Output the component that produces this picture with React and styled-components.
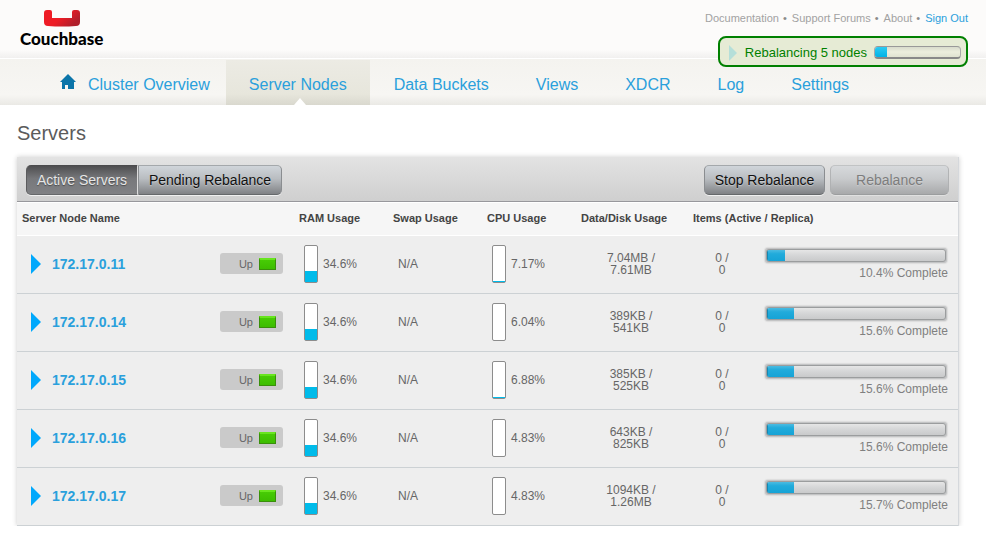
import React from 'react';
import styled, { createGlobalStyle } from 'styled-components';

const GlobalStyle = createGlobalStyle`
  *, *::before, *::after { box-sizing: border-box; }
  body {
    margin: 0;
    background: #fff;
    color: #666;
    font-family: "Liberation Sans", Arial, sans-serif;
    font-size: 12px;
    line-height: 12px;
  }
  a { color: #2aa0dc; text-decoration: none; }
  button { font-family: inherit; cursor: pointer; }
  button:disabled { cursor: default; }
`;

const Header = styled.header`
  display: flex;
  justify-content: space-between;
  align-items: flex-start;
  height: 58px;
  padding: 10px 18px 0 20px;
  background: linear-gradient(#fcfbfa 0 50px, #f1f0ef);
`;

const Brand = styled.a`
  display: flex;
  flex-direction: column;
  align-items: center;
  color: #000;
  font: 900 17px/20px Lato, "Open Sans", sans-serif;

  svg { display: block; margin-bottom: 2px; }
`;

const UtilityLinks = styled.nav`
  display: flex;
  align-items: center;
  font-size: 11px;
  line-height: 16px;
`;

const UtilityLink = styled.a`
  color: ${(p) => (p.$accent ? '#2aa0dc' : '#a2a2a2')};

  &:not(:first-child)::before {
    content: "•";
    margin: 0 5px 0 4px;
    color: #8b8b8b;
  }
`;

const TaskStatus = styled.div`
  position: absolute;
  top: 36px;
  right: 18px;
  display: flex;
  align-items: center;
  height: 31px;
  padding: 2px 5px 0 9px;
  border: 2px solid #008000;
  border-radius: 8px;
  background: #e6ebd5;
  color: #008000;
  font-size: 13px;
  line-height: 16px;

  svg { display: block; margin-right: 8px; }
`;

const TaskTrack = styled.div`
  width: 87px;
  height: 13px;
  margin-left: 7px;
  overflow: hidden;
  border: 1px solid;
  border-color: #999 #a8a8a8 #888;
  border-width: 1px 1px 2px;
  border-radius: 4px;
  background: linear-gradient(#d8dbcc, #eceedd 50%, #dfe2d0);
`;

const TaskFill = styled.div`
  height: 100%;
  background: linear-gradient(#2ccaf2, #00b3e6);
`;

const MainNav = styled.nav`
  display: flex;
  align-items: stretch;
  gap: 1px;
  height: 47px;
  padding-left: 60px;
  border-top: 1px solid #fff;
  background: linear-gradient(#f4f3ef, #f7f6f3 36px, #eae9e5);

  > svg { margin: 15px 11px 0 0; }
`;

const NavItem = styled.a`
  position: relative;
  margin-top: 1px;
  padding: 15px 23px 0;
  font-size: 16px;
  line-height: 20px;
  white-space: nowrap;
  background: ${(p) => (p.$active ? 'linear-gradient(#ecebe4, #e7e6dc 34px, #d9d8ce)' : 'none')};

  &:first-of-type { padding: 15px 15px 0 0; }

  &::after {
    content: "";
    display: ${(p) => (p.$active ? 'block' : 'none')};
    position: absolute;
    bottom: 0;
    left: 50%;
    margin-left: -4px;
    border: 6px solid transparent;
    border-top: 0;
    border-bottom: 7px solid #fff;
  }
`;

const Main = styled.main`
  padding: 14px 27px 0 17px;
`;

const Title = styled.h1`
  margin: 0 0 10px;
  color: #5b5b5b;
  font-size: 20px;
  font-weight: normal;
  line-height: 28px;
`;

const Panel = styled.section`
  border-right: 1px solid #d5d8dc;
  background: #eee;
  box-shadow: 0 0 5px rgba(0, 0, 0, 0.2);
`;

const Toolbar = styled.div`
  display: flex;
  align-items: center;
  justify-content: space-between;
  height: 45px;
  padding: 1px 9px 0;
  border-bottom: 1px solid #98989c;
  background: linear-gradient(#e3e3e3, #cfcfcf);
`;

const ButtonGroup = styled.div`
  display: flex;
  gap: ${(p) => p.$gap || 0}px;
`;

const ToolButton = styled.button`
  min-width: ${(p) => p.$minWidth || 0}px;
  height: 30px;
  padding: 0 9px;
  border: 1px solid;
  border-color: #a4a8ab #8a8d90 #66696b;
  border-radius: 5px;
  background: linear-gradient(#d0d5da, #b9bdc1 45%, #808285);
  color: #111;
  font-size: 14px;
  line-height: 20px;
  text-shadow: 0 1px 1px rgba(255, 255, 255, 0.4);
  box-shadow: 0 1px 0 #f0f0f0;

  &:disabled { opacity: 0.5; color: #222; }
`;

const TabButton = styled(ToolButton)`
  border-radius: ${(p) => (p.$active ? '5px 0 0 5px' : '0 5px 5px 0')};

  ${(p) => p.$active && `
    border-color: #4c4c4e #ddd #66686a #5c5c5e;
    background: linear-gradient(#4f4f51, #77787b 45%, #808184);
    color: #e6e6e6;
    text-shadow: 0 1px 1px rgba(0, 0, 0, 0.4);
  `}
`;

const ServerTable = styled.table`
  width: 100%;
  table-layout: fixed;
  border-collapse: separate;
  border-spacing: 0;
`;

const Col = styled.col`
  width: ${(p) => (p.$width ? `${p.$width}px` : 'auto')};
`;

const HeadCell = styled.th`
  height: 34px;
  padding: 0 0 2px ${(p) => p.$indent || 0}px;
  border-top: 1px solid #fff;
  border-bottom: 1px solid #fff;
  background: #f6f6f6;
  color: #444;
  font-size: 11px;
  text-align: left;
  white-space: nowrap;
`;

const Cell = styled.td`
  height: 58px;
  padding: 0 0 2px ${(p) => p.$indent || 0}px;
  border-bottom: 1px solid #ccd1d4;
  text-align: ${(p) => p.$align || 'left'};
  vertical-align: middle;
`;

const Inline = styled.div`
  display: flex;
  align-items: center;
  gap: ${(p) => p.$gap}px;
`;

const ExpandButton = styled.button`
  display: block;
  padding: 0;
  border: 0;
  background: none;

  svg { display: block; }
`;

const NodeLink = styled.a`
  font-size: 14px;
  font-weight: bold;
  line-height: 18px;
`;

const StatusBadge = styled.div`
  display: flex;
  align-items: center;
  justify-content: flex-end;
  gap: 6px;
  width: 63px;
  height: 21px;
  padding-right: 7px;
  border-radius: 3px;
  background: #cacaca;
  font-size: 11px;

  &::after {
    content: "";
    width: 17px;
    height: 12px;
    border: 1px solid #398f0b;
    border-top: 2px solid #68e51e;
    background: linear-gradient(#47cb05, #3dbd00);
  }
`;

const Gauge = styled.div`
  display: flex;
  align-items: flex-end;
  width: 14px;
  height: 38px;
  border: 1px solid #8c8c8c;
  border-radius: 2px;
  background: #fff;
`;

const GaugeFill = styled.div`
  width: 100%;
  background: #00bbea;
`;

const Track = styled.div`
  height: 15px;
  padding: 1px;
  border-radius: 3px;
  background: #c3c4c5;
  box-shadow: 0 0 1px 1px #dcdcdc;
`;

const TrackInner = styled.div`
  height: 13px;
  overflow: hidden;
  border: 1px solid #9b9d9e;
  border-radius: 3px;
  background: linear-gradient(#e6e6e6, #d6d7d8 45%, #c9cacb);
`;

const TrackFill = styled.div`
  height: 100%;
  border-left: 1px solid #1687b0;
  background: linear-gradient(#4bbbe1, #21abdb 35%, #16a3d6);
`;

const ProgressLabel = styled.div`
  margin: 4px -1px 0 0;
  color: #808080;
  text-align: right;
`;

const ProgressWrap = styled.div`
  padding: 0 11px 0 14px;
`;

const servers = [
  { name: '172.17.0.11', cpu: 7.17, data: '7.04MB', disk: '7.61MB', progress: 10.4 },
  { name: '172.17.0.14', cpu: 6.04, data: '389KB', disk: '541KB', progress: 15.6 },
  { name: '172.17.0.15', cpu: 6.88, data: '385KB', disk: '525KB', progress: 15.6 },
  { name: '172.17.0.16', cpu: 4.83, data: '643KB', disk: '825KB', progress: 15.6 },
  { name: '172.17.0.17', cpu: 4.83, data: '1094KB', disk: '1.26MB', progress: 15.7 },
];

const navItems = ['Cluster Overview', 'Server Nodes', 'Data Buckets', 'Views', 'XDCR', 'Log', 'Settings'];

function Usage({ label, value, level }) {
  return (
    <Inline $gap={5}>
      <Gauge role="img" aria-label={`${label} ${value}`}>
        <GaugeFill style={{ height: level }} />
      </Gauge>
      <span>{value}</span>
    </Inline>
  );
}

function ServerRow({ server }) {
  return (
    <tr>
      <Cell $indent={14}>
        <Inline $gap={11}>
          <ExpandButton aria-label={`Expand ${server.name}`}>
            <svg width="10" height="20" viewBox="0 0 10 20"><path d="M0 0L10 10L0 20Z" fill="#00a8fc" /></svg>
          </ExpandButton>
          <NodeLink href="#node">{server.name}</NodeLink>
        </Inline>
      </Cell>
      <Cell><StatusBadge>Up</StatusBadge></Cell>
      <Cell $indent={5}><Usage label="RAM" value="34.6%" level={11} /></Cell>
      <Cell $indent={5}>N/A</Cell>
      <Cell $indent={5}>
        <Usage label="CPU" value={`${server.cpu}%`} level={server.cpu > 6.5 ? 1 : 0} />
      </Cell>
      <Cell $align="center">{server.data} /<br />{server.disk}</Cell>
      <Cell $align="center" $indent={12}>0 /<br />0</Cell>
      <Cell>
        <ProgressWrap>
          <Track role="progressbar" aria-label={`Rebalance of ${server.name}`} aria-valuenow={server.progress}>
            <TrackInner>
              <TrackFill style={{ width: `${Math.floor(server.progress)}%` }} />
            </TrackInner>
          </Track>
          <ProgressLabel>{server.progress}% Complete</ProgressLabel>
        </ProgressWrap>
      </Cell>
    </tr>
  );
}

export default function App() {
  return (
    <>
      <GlobalStyle />
      <Header>
        <Brand href="#home">
          <svg width="36" height="17" viewBox="0 0 36 17">
            <defs>
              <linearGradient id="brandRed" x1="0" y1="0" x2="1" y2="0.5">
                <stop offset="0.55" stopColor="#ee1c25" />
                <stop offset="1" stopColor="#b01f2b" />
              </linearGradient>
            </defs>
            <path
              d="M0 3Q0 0 3 0H6Q8 0 8 2V8H28V2Q28 0 30 0H33Q36 0 36 3V12Q36 16 32 16Q18 17 4 16Q0 16 0 12Z"
              fill="url(#brandRed)"
            />
          </svg>
          Couchbase
        </Brand>
        <UtilityLinks aria-label="Help and account">
          <UtilityLink href="#docs">Documentation</UtilityLink>
          <UtilityLink href="#forums">Support Forums</UtilityLink>
          <UtilityLink href="#about">About</UtilityLink>
          <UtilityLink href="#signout" $accent>Sign Out</UtilityLink>
        </UtilityLinks>
      </Header>
      <MainNav aria-label="Main">
        <svg width="16" height="16" viewBox="0 0 16 16" aria-hidden="true">
          <path d="M8 0L16 8H14V15H8V11H5V15H2V8H0Z" fill="#0b75a9" />
        </svg>
        {navItems.map((item) => (
          <NavItem key={item} href="#nav" $active={item === 'Server Nodes'}>{item}</NavItem>
        ))}
      </MainNav>
      <TaskStatus>
        <svg width="8" height="16" viewBox="0 0 8 16" aria-hidden="true">
          <path d="M0 0L8 8L0 16Z" fill="#b5dfd9" />
        </svg>
        Rebalancing 5 nodes
        <TaskTrack role="progressbar" aria-label="Rebalance progress" aria-valuenow={14}>
          <TaskFill style={{ width: '14%' }} />
        </TaskTrack>
      </TaskStatus>
      <Main>
        <Title>Servers</Title>
        <Panel>
          <Toolbar>
            <ButtonGroup>
              <TabButton $active $minWidth={112} aria-pressed="true">Active Servers</TabButton>
              <TabButton $minWidth={144} aria-pressed="false">Pending Rebalance</TabButton>
            </ButtonGroup>
            <ButtonGroup $gap={5}>
              <ToolButton $minWidth={121}>Stop Rebalance</ToolButton>
              <ToolButton $minWidth={119} disabled>Rebalance</ToolButton>
            </ButtonGroup>
          </Toolbar>
          <ServerTable>
            <colgroup>
              <Col />
              <Col $width={79} />
              <Col $width={94} />
              <Col $width={94} />
              <Col $width={94} />
              <Col $width={100} />
              <Col $width={70} />
              <Col $width={207} />
            </colgroup>
            <thead>
              <tr>
                <HeadCell colSpan={2} $indent={5}>Server Node Name</HeadCell>
                <HeadCell>RAM Usage</HeadCell>
                <HeadCell>Swap Usage</HeadCell>
                <HeadCell>CPU Usage</HeadCell>
                <HeadCell>Data/Disk Usage</HeadCell>
                <HeadCell colSpan={2} $indent={12}>Items (Active / Replica)</HeadCell>
              </tr>
            </thead>
            <tbody>
              {servers.map((server) => <ServerRow key={server.name} server={server} />)}
            </tbody>
          </ServerTable>
        </Panel>
      </Main>
    </>
  );
}
